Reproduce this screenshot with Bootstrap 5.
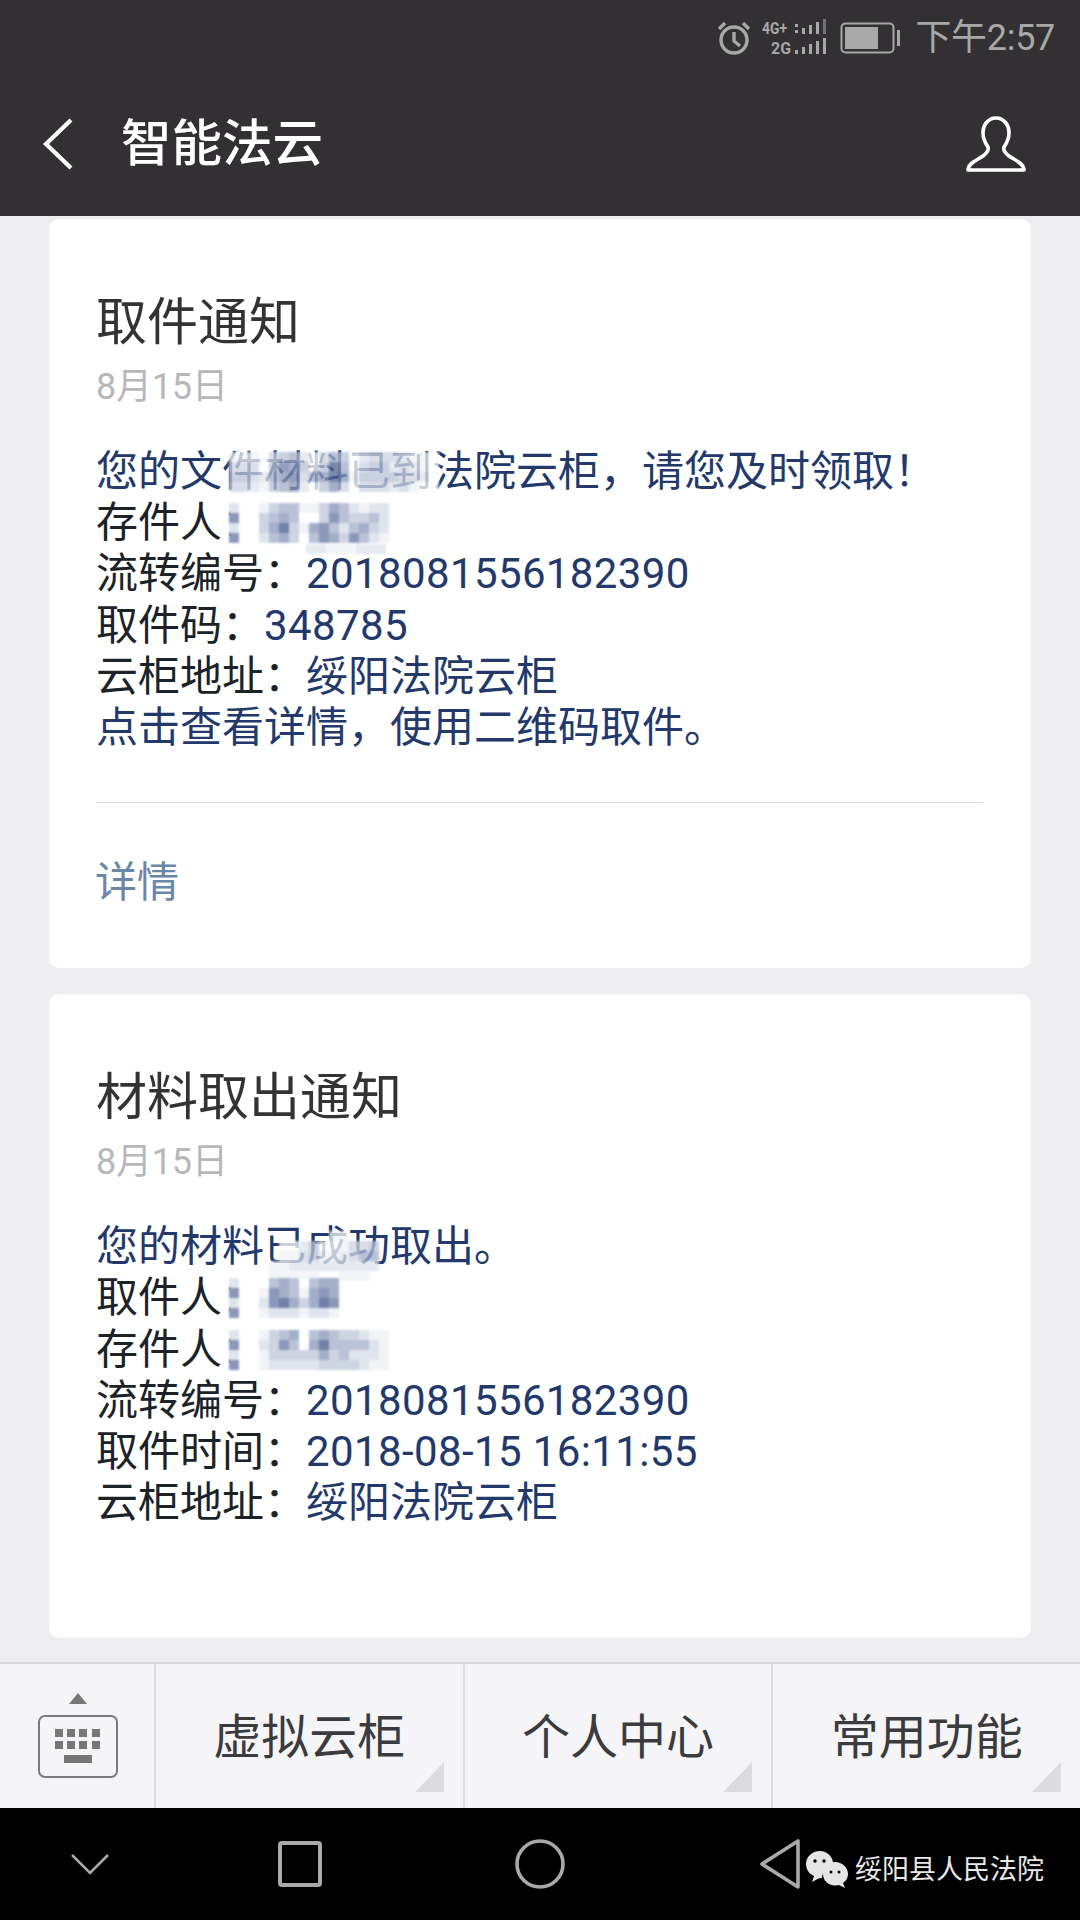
<!DOCTYPE html>
<html lang="zh-CN">
<head>
<meta charset="utf-8">
<title>智能法云</title>
<link href="https://cdn.jsdelivr.net/npm/bootstrap@5.3.0/dist/css/bootstrap.min.css" rel="stylesheet">
<style>
html,body{margin:0;background:#ededf0}
body{width:1080px;height:1920px;overflow:hidden;font-family:Roboto,"Noto Sans CJK SC",sans-serif;color:#262626}
.phone{width:1080px;height:1920px}
.top-bar{height:216px;background:#323033;color:#fff;flex:none}
.status-row{height:72px;padding-right:25px;gap:10px;color:#a8a8a8;font-size:36px;padding-top:4px}
.status-time{margin-left:3px;line-height:1;letter-spacing:-.3px}
.nav-row{height:144px;padding:0 54px 0 43px}
.page-title{font-size:50.5px;line-height:60px;margin:0 0 0 48px;font-weight:500;color:#fff}
.feed{padding:3px 49px 0;gap:26px;min-height:0;overflow:hidden}
.msg-card{border:0;border-radius:10px;background:#fff;flex:none}
.msg-card .card-body{padding:74px 48px 0 47px}
.msg-title{font-size:51px;line-height:60px;font-weight:400;margin:0;color:#333}
.msg-date{font-size:36px;line-height:40px;margin:14px 0 0;color:#b7b7ba;letter-spacing:-.2px}
.msg-lines{margin:39px 0 0;font-size:42px;line-height:51.2px;color:#1c2328}
.msg-lines div{white-space:nowrap;height:51.2px}
.val{color:#23396b}
.num{letter-spacing:.38px}
.rule{border-top:1px solid #d9dce1;margin-top:49px}
.detail-link{display:block;font-size:42px;line-height:51px;color:#6a86a8;margin-top:54px;padding-bottom:60px;margin-left:-1px;text-decoration:none}
.masked{position:relative;display:inline-block}
.mosaic{position:absolute;display:block;filter:blur(.8px)}
.mosaic-thin{opacity:.76}
.msg-card .card-two{padding-bottom:110px}
.menu-bar{height:146px;flex:none;background:#f5f5f7;border-top:2px solid #d9d9dc}
.menu-key{width:154px;flex:none;padding:29px 0 0 38px}
.menu-cell{flex:1 1 0;position:relative;border-left:2px solid #dcdcdf;font-size:48px;color:#3b3b3d;padding-top:3px}
.menu-cell svg{position:absolute;right:19px;bottom:16px}
.sys-bar{height:112px;flex:none;background:#000;position:relative}
.sys-slot{width:240px;flex:none}
.sys-first{width:180px}
.watermark{position:absolute;left:806px;top:43px;gap:7px;color:#e9e9e9;font-size:27px;line-height:30px}
</style>
</head>
<body>
<div class="phone d-flex flex-column">
  <header class="top-bar">
    <div class="status-row d-flex justify-content-end align-items-center">
      <svg width="36" height="36" viewBox="0 0 36 36" fill="none" stroke="#a8a8a8" stroke-width="3.4"><circle cx="18" cy="20" r="13"/><path d="M18 12v9l6 5M3 9l6-6M33 9l-6-6"/></svg>
      <svg width="68" height="38" viewBox="0 0 68 38" fill="#a8a8a8" font-family="Roboto,sans-serif" font-weight="700" font-size="16">
        <text x="0" y="15" textLength="25" lengthAdjust="spacingAndGlyphs">4G+</text>
        <text x="9" y="35" textLength="20" lengthAdjust="spacingAndGlyphs">2G</text>
        <path d="M33 11h3v3h-3zM33 5h3v3h-3zM40 9h3v6h-3zM47 6h3v9h-3zM54 3h3v12h-3z"/><path d="M61 0h3v15h-3z" opacity=".55"/>
        <path d="M33 31h3v4h-3zM40 28h3v7h-3zM47 25h3v10h-3zM54 22h3v13h-3zM61 19h3v16h-3z"/>
      </svg>
      <svg width="62" height="32" viewBox="0 0 62 32" fill="none"><rect x="1.5" y="1.5" width="52" height="29" rx="4" stroke="#a8a8a8" stroke-width="2"/><rect x="5" y="5" width="33" height="22" fill="#a8a8a8"/><rect x="57" y="8" width="3" height="16" fill="#a8a8a8"/></svg>
      <span class="status-time">下午2:57</span>
    </div>
    <div class="nav-row d-flex align-items-center">
      <svg width="30" height="52" viewBox="0 0 30 52" fill="none" stroke="#fff" stroke-width="4.2"><path d="M28 2 3 26l25 24"/></svg>
      <h1 class="page-title">智能法云</h1>
      <svg class="ms-auto" width="60" height="56" viewBox="0 0 60 56" fill="none" stroke="#fff" stroke-width="3.6" stroke-linejoin="round"><path d="M30 2c-8 0-13 7-13 15 0 7 3 11 5 14 1 3-1 6-5 9-6 4-14 7-15 13v1h56v-1c-1-6-9-9-15-13-4-3-6-6-5-9 2-3 5-7 5-14 0-8-5-15-13-15Z"/></svg>
    </div>
  </header>

  <main class="feed flex-grow-1 d-flex flex-column">
    <article class="card msg-card">
      <div class="card-body">
        <h2 class="msg-title">取件通知</h2>
        <p class="msg-date">8月15日</p>
        <div class="msg-lines">
          <div class="val"><span class="masked">您的文件材料已到法院云柜<svg class="mosaic mosaic-thin" data-rows="111034520354023332110|333047640485034423210|443256735686144443320|332145620463033323100" width="210" height="40" style="left:133px;top:6px"></svg></span>，请您及时领取！</div>
          <div><span class="masked">存件人：<svg class="mosaic" data-rows="2|6|2|6" width="10" height="40" style="left:133px;top:6px"></svg><svg class="mosaic" data-rows="1344113542122|3454003643342|3573156424532|2453046536421" width="130" height="40" style="left:163px;top:6px"></svg></span></div>
          <div><span class="masked">流转编号：<span class="val num">2018081556182390</span><svg class="mosaic mosaic-thin" data-rows="0000000002211122200000|" width="220" height="10" style="left:120px;top:-4px"></svg></span></div>
          <div>取件码：<span class="val num">348785</span></div>
          <div>云柜地址：<span class="val">绥阳法院云柜</span></div>
          <div class="val">点击查看详情，使用二维码取件。</div>
        </div>
        <div class="rule"></div>
        <a class="detail-link" href="#">详情</a>
      </div>
    </article>

    <article class="card msg-card">
      <div class="card-body card-two">
        <h2 class="msg-title">材料取出通知</h2>
        <p class="msg-date">8月15日</p>
        <div class="msg-lines">
          <div class="val"><span class="masked">您的材料已成功取出。<svg class="mosaic mosaic-thin" data-rows="..........11........|.....0024001334......|.....1134112355......|....11222222222.......|....1111100111........" width="200" height="50" style="left:133px;top:10px"></svg></span></div>
          <div><span class="masked">取件人：<svg class="mosaic" data-rows="2|6|2|6" width="10" height="40" style="left:133px;top:6px"></svg><svg class="mosaic" data-rows="04540455|16541565|26753576|12221221" width="80" height="40" style="left:163px;top:6px"></svg></span></div>
          <div><span class="masked">存件人：<svg class="mosaic" data-rows="2|6|2|6" width="10" height="40" style="left:133px;top:6px"></svg><svg class="mosaic" data-rows="1345045433211|2364057444421|1333335342221|1222223333211" width="130" height="40" style="left:163px;top:6px"></svg></span></div>
          <div>流转编号：<span class="val num">2018081556182390</span></div>
          <div>取件时间：<span class="val num">2018-08-15 16:11:55</span></div>
          <div>云柜地址：<span class="val">绥阳法院云柜</span></div>
        </div>
      </div>
    </article>
  </main>

  <nav class="menu-bar d-flex">
    <div class="menu-key">
      <svg class="d-block" width="80" height="86" viewBox="0 0 80 86"><path d="M31 11h18L40 0z" fill="#777"/><rect x="1" y="23" width="78" height="61" rx="6" fill="none" stroke="#7b7b7f" stroke-width="2"/><path fill="#777" d="M17 36h8v8h-8zM29 36h8v8h-8zM41 36h8v8h-8zM54 36h8v8h-8zM17 48h8v8h-8zM29 48h8v8h-8zM41 48h8v8h-8zM54 48h8v8h-8zM26 62h28v8H26z"/></svg>
    </div>
    <div class="menu-cell d-flex align-items-center justify-content-center">虚拟云柜<svg width="29" height="30"><path d="M29 0v30H0z" fill="#dcdcde"/></svg></div>
    <div class="menu-cell d-flex align-items-center justify-content-center">个人中心<svg width="29" height="30"><path d="M29 0v30H0z" fill="#dcdcde"/></svg></div>
    <div class="menu-cell d-flex align-items-center justify-content-center">常用功能<svg width="29" height="30"><path d="M29 0v30H0z" fill="#dcdcde"/></svg></div>
  </nav>

  <footer class="sys-bar d-flex align-items-center">
    <div class="sys-slot sys-first d-flex justify-content-center"><svg width="40" height="22" viewBox="0 0 40 22" fill="none" stroke="#a8a8a8" stroke-width="2.6"><path d="M2 2l18 18L38 2"/></svg></div>
    <div class="sys-slot d-flex justify-content-center"><svg width="44" height="46" viewBox="0 0 44 46" fill="none" stroke="#a9a9a9" stroke-width="4"><rect x="2" y="2" width="40" height="42" rx="2"/></svg></div>
    <div class="sys-slot d-flex justify-content-center"><svg width="50" height="50" viewBox="0 0 50 50" fill="none" stroke="#a9a9a9" stroke-width="3.6"><circle cx="25" cy="25" r="23"/></svg></div>
    <div class="sys-slot d-flex justify-content-center"><svg width="42" height="50" viewBox="0 0 42 50" fill="none" stroke="#a9a9a9" stroke-width="3.6" stroke-linejoin="round"><path d="M39 2v46L3 25Z"/></svg></div>
    <div class="watermark d-flex align-items-center">
      <svg width="42" height="37" viewBox="0 0 42 37"><path fill="#e6e6e6" d="M14 0c7 0 13 6 13 12 0 2-.6 4-1.600 5.600C20 18 16 22 16 27c-1 .2-2 .3-3 .2L6 31l2-6C3 23 0 18 0 13 0 6 6 0 14 0Z"/><path fill="#e6e6e6" d="M29 11c7 0 13 5 13 12 0 4-2 7-5 9l2 5-6-3c-1 .3-3 .4-4 .4-7 0-12-5-12-11.400C17 16 22 11 29 11Z"/><g fill="#000"><circle cx="9" cy="10" r="1.700"/><circle cx="18" cy="10" r="1.700"/><circle cx="25" cy="21" r="1.500"/><circle cx="33" cy="21" r="1.500"/></g></svg>
      <span>绥阳县人民法院</span>
    </div>
  </footer>
</div>
<script src="https://cdn.jsdelivr.net/npm/bootstrap@5.3.0/dist/js/bootstrap.bundle.min.js"></script>
<script>
var tones=['#ffffff','#f1f3f7','#e0e4ed','#ced4e2','#b9c2d6','#a3aec9','#8b98b9','#7080a8','#506393','#2c4478'];
document.querySelectorAll('svg.mosaic').forEach(function(s){
  var h='';
  s.dataset.rows.split('|').forEach(function(r,y){
    for(var x=0;x<r.length;x++){
      if(r[x]==='.')continue;
      h+='<rect x="'+x*10+'" y="'+y*10+'" width="10" height="10" fill="'+tones[+r[x]]+'"/>';
    }
  });
  s.innerHTML=h;
});
</script>
</body>
</html>
